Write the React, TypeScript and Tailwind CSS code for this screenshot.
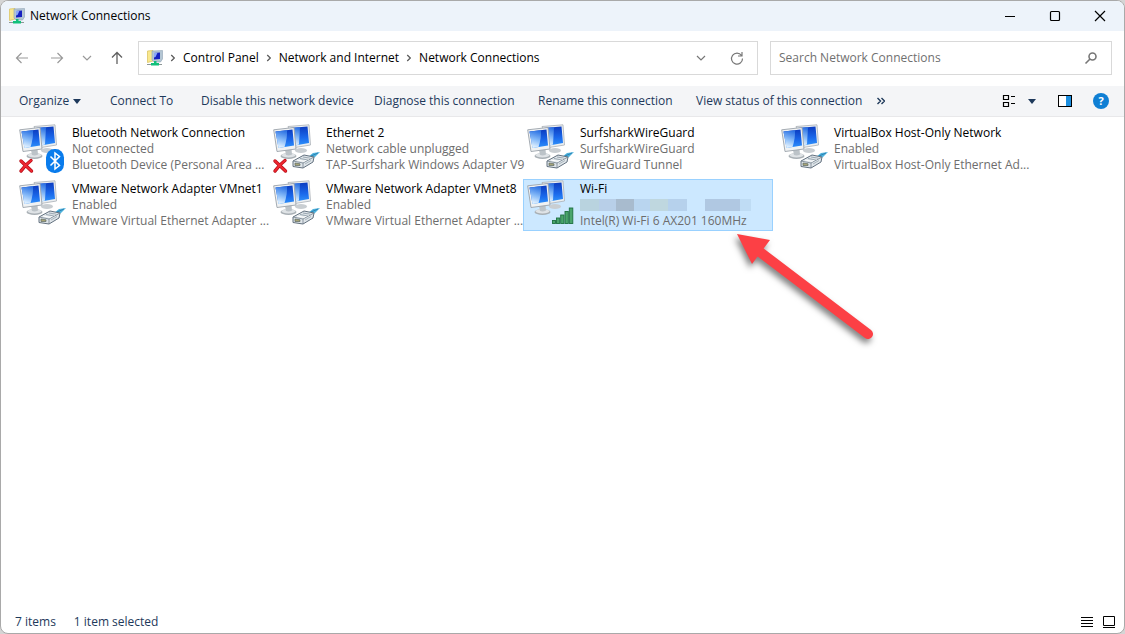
import type { ReactNode } from 'react';

type Badge = 'bluetooth' | 'cable' | 'signal';

interface Connection {
  name: string;
  status: string | null;
  device: string;
  badge: Badge;
  offline?: boolean;
  selected?: boolean;
}

const connections: Connection[] = [
  { name: 'Bluetooth Network Connection', status: 'Not connected', device: 'Bluetooth Device (Personal Area ...', badge: 'bluetooth', offline: true },
  { name: 'Ethernet 2', status: 'Network cable unplugged', device: 'TAP-Surfshark Windows Adapter V9', badge: 'cable', offline: true },
  { name: 'SurfsharkWireGuard', status: 'SurfsharkWireGuard', device: 'WireGuard Tunnel', badge: 'cable' },
  { name: 'VirtualBox Host-Only Network', status: 'Enabled', device: 'VirtualBox Host-Only Ethernet Ad...', badge: 'cable' },
  { name: 'VMware Network Adapter VMnet1', status: 'Enabled', device: 'VMware Virtual Ethernet Adapter ...', badge: 'cable' },
  { name: 'VMware Network Adapter VMnet8', status: 'Enabled', device: 'VMware Virtual Ethernet Adapter ...', badge: 'cable' },
  { name: 'Wi-Fi', status: null, device: 'Intel(R) Wi-Fi 6 AX201 160MHz', badge: 'signal', selected: true },
];

const commands = [
  { label: 'Connect To', width: 'w-[91px]' },
  { label: 'Disable this network device', width: 'w-[173px]' },
  { label: 'Diagnose this connection', width: 'w-[164px]' },
  { label: 'Rename this connection', width: 'w-[158px]' },
  { label: 'View status of this connection', width: 'w-[181px]' },
];

const crumbs = ['Control Panel', 'Network and Internet', 'Network Connections'];

function NetworkIcon() {
  return (
    <svg width="16" height="16" viewBox="0 0 16 16" className="shrink-0" aria-hidden="true">
      <path d="M0.500 1L6 0.500V11L0.500 12.500Z" fill="#f9e88e" stroke="#dcc565" strokeWidth="0.8" />
      <path d="M5 1L15.500 0.500V9L13.500 12H7L5 10Z" fill="#b4c6d4" stroke="#8fa3b4" strokeWidth="0.6" />
      <path d="M7 3L13 2.500V9L7 9.500Z" fill="#1620c0" />
      <path d="M7 3L10.500 2.700L8.500 7L7 7.500Z" fill="#8aa6fa" />
      <path d="M7 11H9.500V13H12V15.500H4V13H7Z" fill="#12c07a" />
      <path d="M0 14.500H4M12 14.500H15" stroke="#8c9696" />
    </svg>
  );
}

function Monitors() {
  return (
    <g>
      <defs>
        <linearGradient id="screen" x1="0" y1="0" x2="0" y2="1">
          <stop offset="0" stopColor="#0c3cc0" />
          <stop offset="0.600" stopColor="#1b6aec" />
          <stop offset="1" stopColor="#2f92fa" />
        </linearGradient>
        <linearGradient id="glare" x1="0.500" y1="0" x2="0.300" y2="1">
          <stop offset="0" stopColor="#2f74e4" />
          <stop offset="0.500" stopColor="#86baf8" />
          <stop offset="1" stopColor="#f0f9ff" />
        </linearGradient>
      </defs>
      <ellipse cx="31" cy="26.500" rx="6" ry="2.500" fill="#c9ced2" />
      <path d="M18 2.500L39 0.800L40.500 21L25 23.500Z" fill="#eceff1" stroke="#a9b0b6" strokeWidth="0.8" />
      <path d="M20 4L37.500 2.500L39 19L25 21.500Z" fill="url(#screen)" />
      <path d="M20 4L30 3.200L29 20.500L25 21.500Z" fill="url(#glare)" />
      <ellipse cx="18.500" cy="32" rx="8" ry="3" fill="#a9b0b5" />
      <ellipse cx="18.500" cy="31.300" rx="7" ry="2.200" fill="#dfe3e6" />
      <path d="M15 26L21.500 25L22 30.500Q19 32 16 31Z" fill="#bcc3c8" />
      <path d="M3.700 5.800L24 3.500L26 25L7 27.500Z" fill="#f0f2f3" stroke="#9ba3aa" strokeWidth="0.9" />
      <path d="M5.500 7.500L22.500 5.500L24 21.500L8.500 24Z" fill="url(#screen)" />
      <path d="M5.500 7.500L17 6.200Q17.500 14 14.500 23L8.500 24Z" fill="url(#glare)" />
    </g>
  );
}

function CableBadge() {
  return (
    <g strokeLinejoin="round">
      <path d="M38 33L43 29L50 28L45 33L40 36Z" fill="#4eb2dc" />
      <path d="M41 32L48 29" stroke="#2b83b5" />
      <path d="M23 37L34 31L44 33L43 38L33 44L23 42.500Z" fill="#dfe5e9" stroke="#63717f" />
      <path d="M23 37L33 39L44 33M33 39V44" fill="none" stroke="#74828e" strokeWidth="0.8" />
      <path d="M27 36L34 37.300L40 34" fill="none" stroke="#fff" />
      <path d="M30 34.500L38 36M33 33L40 34.200" stroke="#8795a2" strokeWidth="0.8" />
      <path d="M25 39V41.500H30V39.800Z" fill="#a9a577" stroke="#5e6a63" strokeWidth="0.7" />
      <path d="M35 40L41 36.500" stroke="#9aa8b3" strokeWidth="0.8" />
    </g>
  );
}

function BluetoothBadge() {
  return (
    <g>
      <rect x="30" y="25" width="18" height="24" rx="8.500" fill="#0a7cec" />
      <path d="M34.500 32.500L43.500 41.500L39 45V29L43.500 32.500L34.500 41.500" fill="none" stroke="#fff" strokeWidth="1.500" />
    </g>
  );
}

function SignalBadge() {
  return (
    <g fill="#4aa56c" stroke="#1d7040" strokeWidth="0.9">
      <rect x="28.500" y="40.500" width="3" height="3" />
      <rect x="32.500" y="38" width="3.200" height="5.500" />
      <rect x="36.700" y="35" width="3.300" height="8.500" />
      <rect x="41" y="31.500" width="3.300" height="12" />
      <rect x="45.300" y="28" width="3.500" height="15.500" />
    </g>
  );
}

function AdapterIcon({ badge, offline }: { badge: Badge; offline?: boolean }) {
  return (
    <svg width="52" height="50" viewBox="0 0 52 50" className="shrink-0" aria-hidden="true">
      <Monitors />
      {badge === 'cable' && <CableBadge />}
      {badge === 'bluetooth' && <BluetoothBadge />}
      {badge === 'signal' && <SignalBadge />}
      {offline && (
        <g fill="none" strokeLinecap="round">
          <path d="M5 37L15.500 47M15 36.500Q9 41 5 47" stroke="#b50d18" strokeWidth="3.400" />
          <path d="M5 37L15.500 47M15 36.500Q9 41 5 47" stroke="#ee2730" strokeWidth="2" />
        </g>
      )}
    </svg>
  );
}

function Pointer() {
  return (
    <svg
      width="170"
      height="135"
      viewBox="0 0 170 135"
      className="pointer-events-none absolute top-[46px] left-[197px] z-10 drop-shadow-[-2px_4px_3px_rgba(0,0,0,0.5)]"
      aria-hidden="true"
    >
      <path d="M40 27L148 109" stroke="#fc4045" strokeWidth="10" strokeLinecap="round" />
      <path d="M17 9L50 15L32 39Z" fill="#fc4045" />
    </svg>
  );
}

function RedactedStatus() {
  return (
    <span className="my-0.5 flex h-3" aria-label="Hidden network name">
      <span className="w-[19px] bg-[#b9d3df]" />
      <span className="w-[17px] bg-[#b8cfe8]" />
      <span className="w-[18px] bg-[#a8bbce]" />
      <span className="w-[16px] bg-[#b9d5ef]" />
      <span className="w-[18px] bg-[#bfd7df]" />
      <span className="w-[19px] bg-[#b6d1ec]" />
      <span className="w-[18px]" />
      <span className="w-[35px] bg-[#b0c8e2]" />
      <span className="w-[11px] bg-[#bfdcf4]" />
    </span>
  );
}

function ConnectionTile({ connection }: { connection: Connection }) {
  const { name, status, device, badge, offline, selected } = connection;
  return (
    <li className="relative">
      <button
        type="button"
        className={`flex h-[52px] w-full items-start border text-left leading-4 ${
          selected ? 'border-[#99d1ff] bg-[#cce8ff]' : 'border-transparent'
        }`}
      >
        <AdapterIcon badge={badge} offline={offline} />
        <span className="flex min-w-0 flex-1 flex-col pt-px pl-1 whitespace-nowrap text-[#6d6d6d]">
          <span className="text-black">{name}</span>
          {status ? <span>{status}</span> : <RedactedStatus />}
          <span>{device}</span>
        </span>
      </button>
      {selected && <Pointer />}
    </li>
  );
}

function IconButton({ label, className, children }: { label: string; className?: string; children: ReactNode }) {
  return (
    <button type="button" aria-label={label} className={`flex items-center justify-center ${className ?? ''}`}>
      {children}
    </button>
  );
}

function Stroke({ d, color = '#000', size = 16, width = 1 }: { d: string; color?: string; size?: number; width?: number }) {
  return (
    <svg width={size} height={size} viewBox="0 0 16 16" fill="none" stroke={color} strokeWidth={width} aria-hidden="true">
      <path d={d} />
    </svg>
  );
}

export default function App() {
  return (
    <div className="bg-[#d5d5d5]">
      <div className="flex min-h-screen flex-col overflow-hidden rounded-lg border border-[#a9a9a9] bg-white font-['Open_Sans','Noto_Sans',sans-serif] text-[12px] text-black">
        {/* Title bar */}
        <header className="flex h-[30px] items-center bg-[#edf3fa] pr-px pl-2">
          <NetworkIcon />
          <h1 className="flex-1 pl-[5px]">Network Connections</h1>
          <IconButton label="Minimize" className="h-full w-[46px]">
            <Stroke d="M3 8.500H13" />
          </IconButton>
          <IconButton label="Maximize" className="h-full w-[44px]">
            <Stroke d="M4.500 3.500H11.500Q12.500 3.500 12.500 4.500V11.500Q12.500 12.500 11.500 12.500H4.500Q3.500 12.500 3.500 11.500V4.500Q3.500 3.500 4.500 3.500Z" width={1.2} />
          </IconButton>
          <IconButton label="Close" className="h-full w-[46px]">
            <Stroke d="M3 3L13 13M13 3L3 13" width={1.2} />
          </IconButton>
        </header>

        {/* Navigation */}
        <nav className="flex h-[55px] items-center pr-3 pb-px">
          <IconButton label="Back" className="w-[42px]">
            <Stroke d="M14 8H2.500M7.500 3L2.500 8L7.500 13" color="#999" width={1.2} />
          </IconButton>
          <IconButton label="Forward" className="w-7">
            <Stroke d="M2 8H13.500M8.500 3L13.500 8L8.500 13" color="#999" width={1.2} />
          </IconButton>
          <IconButton label="Recent locations" className="w-8">
            <Stroke d="M4 6L8 10L12 6" color="#999" width={1.2} />
          </IconButton>
          <IconButton label="Up" className="w-[27px]">
            <Stroke d="M8 14V2.500M3 7.500L8 2.500L13 7.500" color="#606060" width={1.3} />
          </IconButton>
          <div className="ml-2 flex h-[34px] flex-[610] items-center border border-[#d9d9d9] pl-2">
            <NetworkIcon />
            {crumbs.map((crumb) => (
              <span key={crumb} className="flex items-center">
                <span className="flex w-5 justify-center">
                  <Stroke d="M6 4.500L9.500 8L6 11.500" color="#5c5c5c" width={1.5} size={14} />
                </span>
                <a href="#">{crumb}</a>
              </span>
            ))}
            <IconButton label="Previous locations" className="ml-auto w-8">
              <Stroke d="M4 6L8 10L12 6" color="#777" width={1.2} />
            </IconButton>
            <IconButton label="Refresh" className="mr-1 ml-1 w-8">
              <Stroke d="M12.500 5.500A5.500 5.500 0 1 0 13.500 8.500M13 2V6H9" color="#777" width={1.2} />
            </IconButton>
          </div>
          <label className="ml-3 flex h-[34px] flex-[332] items-center border border-[#d9d9d9] pl-2">
            <input
              type="text"
              aria-label="Search Network Connections"
              placeholder="Search Network Connections"
              className="min-w-0 flex-1 outline-none placeholder:text-[#707070]"
            />
            <span className="mr-3">
              <svg width="16" height="16" viewBox="0 0 16 16" fill="none" stroke="#777" strokeWidth="1.600" aria-hidden="true">
                <circle cx="9.500" cy="6.500" r="3.500" />
                <path d="M7 9L2.500 13.500" />
              </svg>
            </span>
          </label>
        </nav>

        {/* Command bar */}
        <div role="toolbar" className="flex h-[31px] items-center border-b border-[#e8e8ea] bg-[#f4f5f7] pl-[18px] whitespace-nowrap text-[#1e395b]">
          <button type="button" className="flex w-[91px] items-center gap-1">
            Organize
            <svg width="8" height="5" viewBox="0 0 8 5" aria-hidden="true">
              <path d="M0 0H8L4 5Z" fill="#1e395b" />
            </svg>
          </button>
          {commands.map((command) => (
            <button key={command.label} type="button" className={`text-left ${command.width}`}>
              {command.label}
            </button>
          ))}
          <IconButton label="More commands">
            <svg width="8" height="8" viewBox="0 0 8 8" fill="none" stroke="#1e395b" strokeWidth="1.400" aria-hidden="true">
              <path d="M0.500 1L3.500 4L0.500 7M4.500 1L7.500 4L4.500 7" />
            </svg>
          </IconButton>
          <div className="ml-auto flex items-center pr-[15px]">
            <IconButton label="Change your view" className="w-4">
              <Stroke d="M2.500 2.500H7.500V6.500H2.500ZM2.500 9.500H7.500V13.500H2.500ZM10 3.500H14M10 10.500H14" width={1.2} />
            </IconButton>
            <IconButton label="More view options" className="w-[30px]">
              <svg width="8" height="5" viewBox="0 0 8 5" aria-hidden="true">
                <path d="M0 0H8L4 5Z" fill="#1e395b" />
              </svg>
            </IconButton>
            <IconButton label="Show the preview pane" className="w-9">
              <svg width="14" height="12" viewBox="0 0 14 12" aria-hidden="true">
                <rect x="0.500" y="0.500" width="13" height="11" fill="#fff" stroke="#000" />
                <rect x="8" y="1" width="5" height="10" fill="#1c8fe0" />
              </svg>
            </IconButton>
            <button
              type="button"
              aria-label="Get help"
              className="ml-2.5 flex size-4 items-center justify-center rounded-full bg-[#0f7fd4] text-[11px] leading-4 font-bold text-white"
            >
              ?
            </button>
          </div>
        </div>

        {/* Connections */}
        <main className="flex-1 pt-[6px] pl-[14px]">
          <ul className="grid grid-cols-[repeat(auto-fill,250px)] gap-1">
            {connections.map((connection) => (
              <ConnectionTile key={connection.name} connection={connection} />
            ))}
          </ul>
        </main>

        {/* Status bar */}
        <footer className="flex h-[22px] items-center gap-[18px] pr-[7px] pl-[14px] text-[#1e395b]">
          <span>7 items</span>
          <span>1 item selected</span>
          <div className="ml-auto flex gap-[6px]">
            <IconButton label="Details view">
              <Stroke d="M2 3.500H14M2 6.500H14M2 9.500H14M2 12.500H14" />
            </IconButton>
            <IconButton label="Large icons view">
              <Stroke d="M2.500 2.500H13.500V11.500H2.500ZM2 13.500H14" />
            </IconButton>
          </div>
        </footer>
      </div>
    </div>
  );
}
